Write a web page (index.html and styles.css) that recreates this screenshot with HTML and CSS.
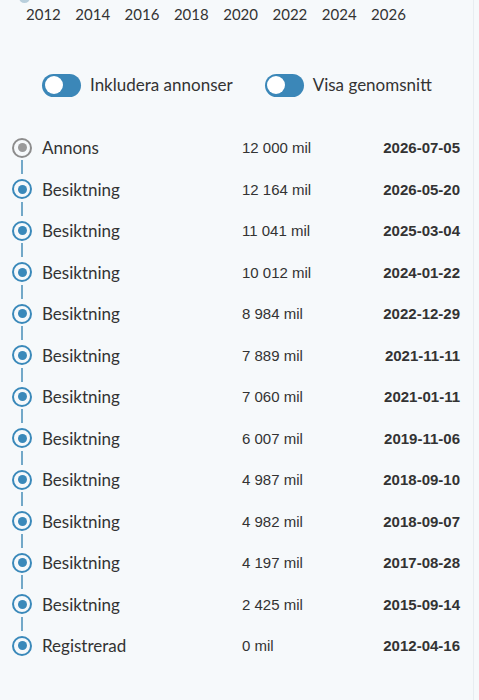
FILE: index.html
```html
<!DOCTYPE html>
<html>
<head>
<meta charset="UTF-8"/>
<meta name="viewport" content="width=device-width, initial-scale=1.0">
<title>Mätarhistorik</title>
<link rel="stylesheet" href="styles.css">
</head>
<body>
<div class="page">
<span class="chart-dot"></span>
<div class="years">
<span>2012</span><span>2014</span><span>2016</span><span>2018</span><span>2020</span><span>2022</span><span>2024</span><span>2026</span>
</div>

<div class="toggles">
<label class="toggle"><span class="switch"></span>Inkludera annonser</label>
<label class="toggle"><span class="switch"></span>Visa genomsnitt</label>
</div>

<ul class="timeline">
<li class="ad"><span class="dot"></span><span class="kind">Annons</span><span class="km">12 000 mil</span><span class="date">2026-07-05</span></li>
<li><span class="dot"></span><span class="kind">Besiktning</span><span class="km">12 164 mil</span><span class="date">2026-05-20</span></li>
<li><span class="dot"></span><span class="kind">Besiktning</span><span class="km">11 041 mil</span><span class="date">2025-03-04</span></li>
<li><span class="dot"></span><span class="kind">Besiktning</span><span class="km">10 012 mil</span><span class="date">2024-01-22</span></li>
<li><span class="dot"></span><span class="kind">Besiktning</span><span class="km">8 984 mil</span><span class="date">2022-12-29</span></li>
<li><span class="dot"></span><span class="kind">Besiktning</span><span class="km">7 889 mil</span><span class="date">2021-11-11</span></li>
<li><span class="dot"></span><span class="kind">Besiktning</span><span class="km">7 060 mil</span><span class="date">2021-01-11</span></li>
<li><span class="dot"></span><span class="kind">Besiktning</span><span class="km">6 007 mil</span><span class="date">2019-11-06</span></li>
<li><span class="dot"></span><span class="kind">Besiktning</span><span class="km">4 987 mil</span><span class="date">2018-09-10</span></li>
<li><span class="dot"></span><span class="kind">Besiktning</span><span class="km">4 982 mil</span><span class="date">2018-09-07</span></li>
<li><span class="dot"></span><span class="kind">Besiktning</span><span class="km">4 197 mil</span><span class="date">2017-08-28</span></li>
<li><span class="dot"></span><span class="kind">Besiktning</span><span class="km">2 425 mil</span><span class="date">2015-09-14</span></li>
<li><span class="dot"></span><span class="kind">Registrerad</span><span class="km">0 mil</span><span class="date">2012-04-16</span></li>
</ul>
</div>
</body>
</html>
```

FILE: styles.css
```css
html, body {
    margin: 0;
    padding: 0;
}
body {
    background: #f6f9fb;
    color: #333;
    font-family: Lato, "Open Sans", sans-serif;
}
.page {
    position: relative;
    width: 473px;
    height: 700px;
    border-right: 1px solid #e8edf1;
    overflow: hidden;
}
.chart-dot {
    position: absolute;
    left: 19px;
    top: -8px;
    width: 11px;
    height: 11px;
    border-radius: 50%;
    background: #b9cfdc;
}
.years {
    display: flex;
    padding: 4px 0 0 26px;
    font-size: 15px;
    line-height: 20px;
    color: #333;
}
.years span {
    width: 49.3px;
}
.toggles {
    display: flex;
    gap: 32px;
    padding: 49px 0 0 42px;
    font-size: 17px;
}
.toggle {
    display: flex;
    align-items: center;
    gap: 9px;
    line-height: 24px;
}
.switch {
    position: relative;
    width: 39px;
    height: 23px;
    border-radius: 12px;
    background: #3b87b8;
}
.switch::after {
    content: "";
    position: absolute;
    left: 2.5px;
    top: 2.5px;
    width: 18px;
    height: 18px;
    border-radius: 50%;
    background: #fff;
}
.timeline {
    list-style: none;
    margin: 0;
    padding: 30px 0 0 12px;
}
.timeline li {
    position: relative;
    display: flex;
    align-items: center;
    height: 41.5px;
}
.timeline li:not(:last-child)::after {
    content: "";
    position: absolute;
    left: 9px;
    top: 33px;
    width: 2px;
    height: 14px;
    background: #72a8c8;
}
.dot {
    box-sizing: border-box;
    width: 20px;
    height: 20px;
    border-radius: 50%;
    border: 2.5px solid #3a89ba;
    display: flex;
    align-items: center;
    justify-content: center;
    margin-right: 10px;
}
.dot::before {
    content: "";
    width: 9px;
    height: 9px;
    border-radius: 50%;
    background: #3a89ba;
}
.ad .dot {
    border-color: #8d8d8d;
}
.ad .dot::before {
    background: #9a9a9a;
}
.kind {
    width: 200px;
    font-size: 17px;
}
.km {
    width: 100px;
    font-family: "Liberation Sans", Arial, sans-serif;
    font-size: 15px;
}
.date {
    width: 118px;
    text-align: right;
    font-family: "Liberation Sans", Arial, sans-serif;
    font-size: 15px;
    font-weight: bold;
}
```
